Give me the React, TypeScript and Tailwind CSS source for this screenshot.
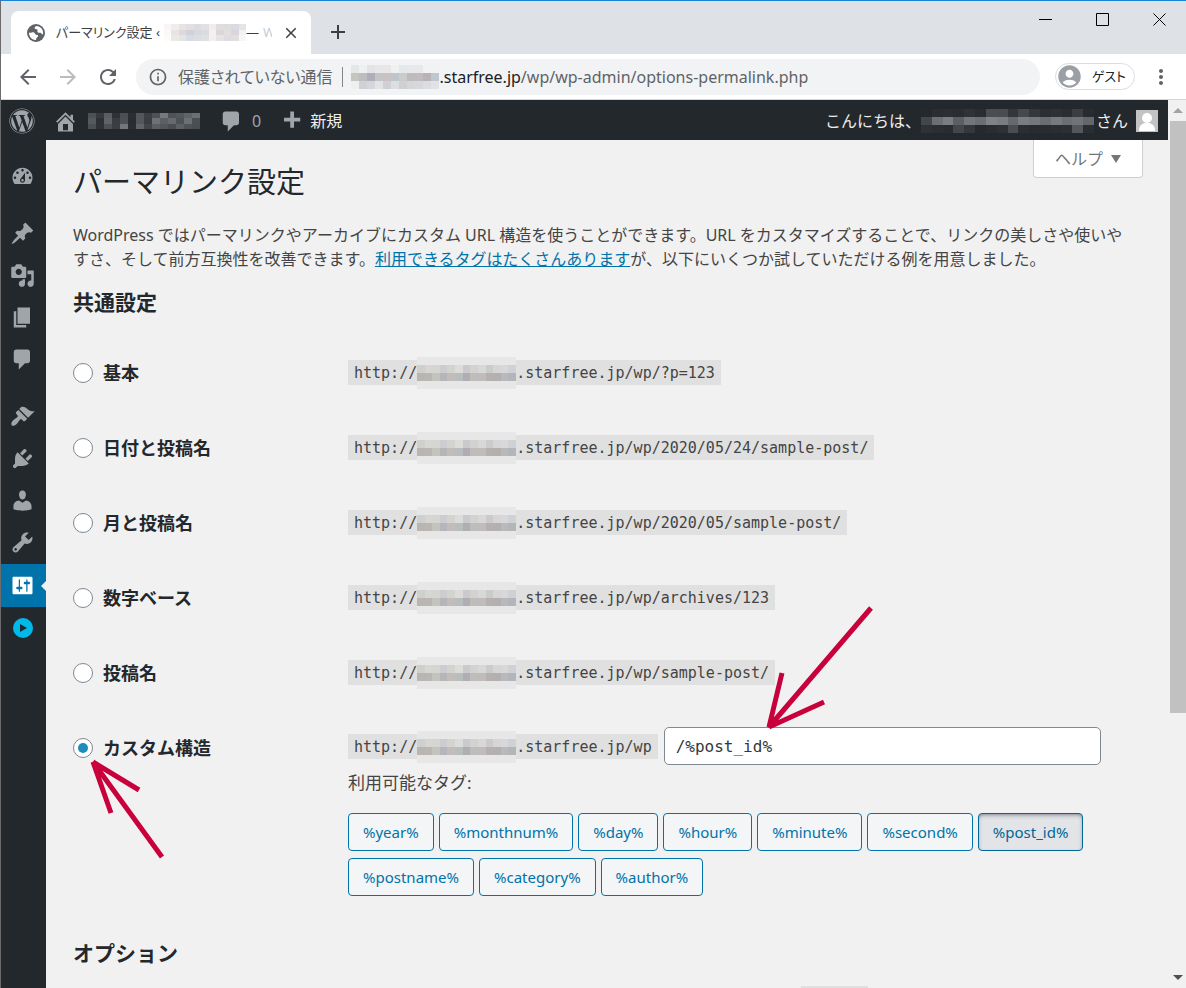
import { useState } from 'react';
import { FaWordpress } from 'react-icons/fa';
import {
  MdAccountCircle,
  MdAdd,
  MdArrowBack,
  MdArrowForward,
  MdClose,
  MdInfoOutline,
  MdMoreVert,
  MdRefresh,
} from 'react-icons/md';

const icons = {
  home: 'M16 8.5l1.53 1.53-1.06 1.06L10 4.6l-6.47 6.49-1.06-1.06L10 2.5l4 4v-2h2v4zm-6-2.46l6 5.99V18H4v-5.97zM12 17v-5H8v5h4z',
  plus: 'M17 7v3h-5v5H9v-5H4V7h5V2h3v5h5z',
  dashboard:
    'M3.76 16h12.48c1.1-1.37 1.76-3.11 1.76-5 0-4.42-3.58-8-8-8s-8 3.58-8 8c0 1.89.66 3.63 1.76 5zM10 4c.55 0 1 .45 1 1s-.45 1-1 1-1-.45-1-1 .45-1 1-1zM6 6c.55 0 1 .45 1 1s-.45 1-1 1-1-.45-1-1 .45-1 1-1zm8 0c.55 0 1 .45 1 1s-.45 1-1 1-1-.45-1-1 .45-1 1-1zm-5.37 5.55L12 7v6c0 1.1-.9 2-2 2s-2-.9-2-2c0-.57.24-1.08.63-1.45zM4 10c.55 0 1 .45 1 1s-.45 1-1 1-1-.45-1-1 .45-1 1-1zm12 0c.55 0 1 .45 1 1s-.45 1-1 1-1-.45-1-1 .45-1 1-1zm-5 3c0-.55-.45-1-1-1s-1 .45-1 1 .45 1 1 1 1-.45 1-1z',
  post: 'M10.44 3.02l1.82-1.82 6.36 6.35-1.83 1.82c-1.05-.68-2.48-.57-3.41.36l-.75.75c-.92.93-1.04 2.35-.35 3.41l-1.83 1.82-2.41-2.41-2.8 2.79c-.42.42-3.38 2.71-3.8 2.29s1.86-3.39 2.28-3.81l2.79-2.79L4.1 9.36l1.83-1.82c1.05.69 2.48.57 3.4-.36l.75-.75c.93-.92 1.05-2.35.36-3.41z',
  media:
    'M13 11V4c0-.55-.45-1-1-1h-1.67L9 1H5L3.67 3H2c-.55 0-1 .45-1 1v7c0 .55.45 1 1 1h10c.55 0 1-.45 1-1zM7 4.5c1.38 0 2.5 1.12 2.5 2.5S8.38 9.5 7 9.5 4.5 8.38 4.5 7 5.62 4.5 7 4.5zM14 6h5v10.5c0 1.38-1.12 2.5-2.5 2.5S14 17.88 14 16.5s1.12-2.5 2.5-2.5c.17 0 .34.02.5.05V9h-3V6zm-4 8.05V13h2v3.5c0 1.38-1.12 2.5-2.5 2.5S7 17.88 7 16.5 8.12 14 9.5 14c.17 0 .34.02.5.05z',
  page: 'M6 15V2h10v13H6zm-1 1h8v2H3V5h2v11z',
  comments:
    'M5 2h9c1.1 0 2 .9 2 2v7c0 1.1-.9 2-2 2h-2l-5 5v-5H5c-1.1 0-2-.9-2-2V4c0-1.1.9-2 2-2z',
  appearance:
    'M14.48 11.06L7.41 3.99l1.5-1.5c.5-.56 2.3-.47 3.51.32 1.21.8 1.43 1.28 2.91 2.1 1.18.64 2.45 1.26 4.45.85zm-.71.71L6.7 4.7 4.93 6.47c-.39.39-.39 1.02 0 1.41l1.06 1.06c.39.39.39 1.03 0 1.42-.6.6-1.43 1.11-2.21 1.69-.35.26-.7.53-1.01.84C1.43 14.23.4 16.08 1.4 17.07c.99 1 2.84-.03 4.18-1.36.31-.31.58-.66.85-1.02.57-.78 1.08-1.61 1.69-2.21.39-.39 1.02-.39 1.41 0l1.06 1.06c.39.39 1.02.39 1.41 0z',
  plugins:
    'M13.11 4.36L9.87 7.6 8 5.73l3.24-3.24c.35-.34 1.05-.2 1.56.32.52.51.66 1.21.31 1.55zm-8 1.77l.91-1.12 9.01 9.01-1.19.84c-.71.71-2.63 1.16-3.82 1.16H6.14L4.9 17.26c-.59.59-1.54.59-2.12 0-.59-.58-.59-1.53 0-2.12l1.24-1.24v-3.88c0-1.13.4-3.19 1.09-3.89zm7.26 3.97l3.24-3.24c.34-.35 1.04-.21 1.55.31.52.51.66 1.21.31 1.55l-3.24 3.25z',
  users:
    'M10 9.25c-2.27 0-2.73-3.44-2.73-3.44C7 4.02 7.82 2 9.97 2c2.16 0 2.98 2.02 2.71 3.81 0 0-.41 3.44-2.68 3.44zm0 2.57L12.72 10c2.39 0 4.52 2.33 4.52 4.53v2.49s-3.65 1.13-7.24 1.13c-3.65 0-7.24-1.13-7.24-1.13v-2.49c0-2.25 1.94-4.48 4.47-4.48z',
  tools:
    'M16.68 9.77c-1.34 1.34-3.3 1.67-4.95.99l-5.41 6.52c-.99.99-2.59.99-3.58 0s-.99-2.59 0-3.57l6.52-5.42c-.68-1.65-.35-3.61.99-4.95 1.28-1.28 3.12-1.62 4.72-1.06l-2.89 2.89 2.82 2.82 2.86-2.87c.53 1.58.18 3.39-1.08 4.65zM3.81 16.21c.4.39 1.04.39 1.43 0 .4-.4.4-1.04 0-1.43-.39-.4-1.03-.4-1.43 0-.39.39-.39 1.03 0 1.43z',
  settings:
    'M18 16V4c0-.55-.45-1-1-1H3c-.55 0-1 .45-1 1v12c0 .55.45 1 1 1h14c.55 0 1-.45 1-1zM8 11h1c.55 0 1 .45 1 1s-.45 1-1 1H8v1.5c0 .28-.22.5-.5.5s-.5-.22-.5-.5V13H6c-.55 0-1-.45-1-1s.45-1 1-1h1V5.5c0-.28.22-.5.5-.5s.5.22.5.5V11zm5-2h-1c-.55 0-1-.45-1-1s.45-1 1-1h1V5.5c0-.28.22-.5.5-.5s.5.22.5.5V7h1c.55 0 1 .45 1 1s-.45 1-1 1h-1v5.5c0 .28-.22.5-.5.5s-.5-.22-.5-.5V9z',
};

type IconName = keyof typeof icons;

function Dashicon({ name }: { name: IconName }) {
  return (
    <svg viewBox="0 0 20 20" className="size-[25px] shrink-0 fill-current" aria-hidden="true">
      <path d={icons[name]} />
    </svg>
  );
}

// Pixelated block that hides a private name, one string of hex shades per line
function Mosaic({ lines, className }: { lines: string[][]; className: string }) {
  const cols = lines[0].length;
  return (
    <svg
      viewBox={`0 0 ${cols} ${lines.length}`}
      preserveAspectRatio="none"
      shapeRendering="crispEdges"
      className={className}
      aria-hidden="true"
    >
      {lines.map((line, y) =>
        line.map((fill, x) => <rect key={`${x}-${y}`} x={x} y={y} width="1" height="1" fill={fill} />)
      )}
    </svg>
  );
}

const tabMosaic = [
  ['#f7f5f5', '#f0ecec', '#e6e3e4', '#e1dfe1', '#dcdcdf', '#e2e0e2', '#f0eded', '#e0dddd', '#dfdcdd', '#dadadf', '#e6e3e6'],
  ['#fbf8f8', '#e8e3e6', '#dcd8dc', '#cfd2d8', '#d8d9dd', '#d9dbdf', '#f3f0ef', '#dcd6d6', '#e3dddd', '#d6d6dc', '#f3f1f3'],
  ['#fcfafa', '#ece9e3', '#e2e4e9', '#d6dce3', '#dcdde2', '#dde1e2', '#f2efec', '#e5e3e3', '#dcdce2', '#e1dede', '#f7f6f6'],
];

const urlMosaic = [
  ['#e5e7e6', '#eff0f2', '#e4e4e7', '#e6e7e9', '#e9e6e7', '#eef0f1', '#e3e9ea', '#e8e8ea', '#e9e8e9', '#f0f2f3', '#f1f2f4'],
  ['#c5c4bf', '#bdbdc0', '#adaeb8', '#c5c3c5', '#cac1c3', '#bdc6cc', '#cbcbca', '#bfbabc', '#c0bbbd', '#b9b3b8', '#bfc8cf'],
  ['#eeeff1', '#cfd1d4', '#d5d6da', '#e3e3e5', '#d0d0d4', '#dedddf', '#cfd0d4', '#d6d5d8', '#d6d8dc', '#dcdde1', '#e2e2e4'],
];

const siteMosaic = [
  ['#4d5155', '#373b40', '#5a5e62', '#2f3338', '#4c5054', '#2b2f34', '#54585b', '#3c4045', '#4e5257', '#777a7c', '#4f5357', '#54585c', '#60646a', '#6d7072'],
  ['#565a5e', '#2d3136', '#606367', '#393d42', '#4d5155', '#292d32', '#54585d', '#3a3e43', '#6f7275', '#5c6064', '#686b6e', '#4d5256', '#6d7073', '#4b4f53'],
  ['#4b4f54', '#2f3338', '#4d5156', '#3b3f44', '#75787a', '#2b2f34', '#606367', '#42464b', '#5b5f63', '#53575b', '#4a4e53', '#5d6064', '#4f5358', '#4a4e52'],
];

const userMosaic = [
  ['#25292e', '#2a2e33', '#2c3035', '#2a2e33', '#2f3338', '#2a2e33', '#4a4e52', '#494d51', '#33373b', '#45494d', '#34383c', '#2b2f34', '#2d3136', '#2a2e33', '#3b3f43', '#282c31'],
  ['#43474b', '#6d7073', '#7b7e80', '#5c6064', '#74777a', '#6b6f72', '#808385', '#7a7d7f', '#66696d', '#7b7e80', '#75787b', '#6b6e71', '#777a7d', '#6c6f72', '#717477', '#63666a'],
  ['#2e3237', '#2b2f34', '#292d32', '#43474b', '#34383d', '#262a2f', '#292d32', '#2d3135', '#4a4e52', '#2b2f34', '#282c31', '#292d32', '#2a2e33', '#2c3035', '#54575b', '#2a2e33'],
];

const light = ['#cfcfcb', '#d6d6d3', '#d5d6d2', '#cdccd0', '#d3d4d0', '#dcdcda', '#cacacd', '#d2d2ce', '#d8d8d8', '#cbcbcc', '#d6d6d6', '#d7d8d9', '#cfd1d4'];
const dark = ['#b9b5b3', '#b9b6b4', '#c4c4be', '#b5b6b8', '#c2bcba', '#babdbe', '#afaeb5', '#c0bcbc', '#bfbcbd', '#b6b1ae', '#b4b0b0', '#b9b9bb', '#b2b5b9'];
const pale = Array<string>(13).fill('#e7e7e7');

const menu: { name: IconName; label: string; spaced?: boolean }[] = [
  { name: 'dashboard', label: 'ダッシュボード' },
  { name: 'post', label: '投稿', spaced: true },
  { name: 'media', label: 'メディア' },
  { name: 'page', label: '固定ページ' },
  { name: 'comments', label: 'コメント' },
  { name: 'appearance', label: '外観', spaced: true },
  { name: 'plugins', label: 'プラグイン' },
  { name: 'users', label: 'ユーザー' },
  { name: 'tools', label: 'ツール' },
];

const structures = [
  { id: 'plain', label: '基本', path: '/wp/?p=123' },
  { id: 'day', label: '日付と投稿名', path: '/wp/2020/05/24/sample-post/' },
  { id: 'month', label: '月と投稿名', path: '/wp/2020/05/sample-post/' },
  { id: 'numeric', label: '数字ベース', path: '/wp/archives/123' },
  { id: 'name', label: '投稿名', path: '/wp/sample-post/' },
];

const tags = ['year', 'monthnum', 'day', 'hour', 'minute', 'second', 'post_id', 'postname', 'category', 'author'];

function UrlCode({ path }: { path: string }) {
  return (
    <code className="flex h-[25px] shrink-0 items-center bg-[#e0e0e0] px-[6px] pt-px font-['DejaVu_Sans_Mono',monospace] text-[15px] leading-6 text-[#444]">
      http://
      <Mosaic lines={[pale, light, dark, pale]} className="h-8 w-[99px]" />
      .starfree.jp{path}
    </code>
  );
}

function Radio({ id, label, selected, onSelect }: { id: string; label: string; selected: string; onSelect: (id: string) => void }) {
  return (
    <div className="flex h-[41px] items-center gap-[10px]">
      <input
        type="radio"
        name="structure"
        id={id}
        checked={selected === id}
        onChange={() => onSelect(id)}
        className="grid size-5 appearance-none place-content-center rounded-full border border-[#7e8993] bg-white before:size-[10px] before:rounded-full checked:before:bg-[#1e8cbe]"
      />
      <label htmlFor={id} className="text-lg leading-6 font-bold text-[#23282d]">
        {label}
      </label>
    </div>
  );
}

function BrowserChrome() {
  return (
    <header className="shrink-0 font-['Noto_Sans','Noto_Sans_CJK_JP',sans-serif]">
      {/* Tab strip */}
      <div className="flex h-[53px] items-start bg-[#dee1e6] pl-[10px]">
        <div className="mt-[10px] flex h-[43px] w-[300px] items-center rounded-t-lg bg-white pr-[11px] pl-4">
          <svg viewBox="0 0 18 18" className="size-[18px] shrink-0" aria-hidden="true">
            <circle cx="9" cy="9" r="9" fill="#5f6368" />
            <path
              fill="#fff"
              d="M9.300 1.900C7.600 3 7.200 4 8 4.700c1 .8 2.100.1 2.500 1.200.3 1-.6 1.500.2 2.300.9.900 2.500.1 3.400.7.700.5.500 1.500 1.900 1.400C16.900 5.500 13.500 2 9.300 1.900zM1.900 8.500c0 4.500 3.400 7.600 7.300 7.600-.3-1.400-.1-2.200.9-2.700 1.100-.6 1.400-1.600.5-2.300-.8-.6-1.900-.3-2.500-1.200C7.300 8.600 6.300 8.200 5 8.400c-1.200.2-2 .5-3.100.1z"
            />
          </svg>
          <p className="ml-[11px] flex min-w-0 flex-1 items-center text-[13px] whitespace-nowrap text-[#3c4043] [font-feature-settings:'palt']">
            パーマリンク設定 ‹
            <Mosaic lines={tabMosaic} className="ml-1 h-[17px] w-[82px] shrink-0" />—
            <span className="ml-1 w-[9px] overflow-hidden text-[#c9cbcd]">W</span>
          </p>
          <button type="button" aria-label="タブを閉じる" className="text-[#3c4043]">
            <MdClose className="size-[18px]" />
          </button>
        </div>
        <button type="button" aria-label="新しいタブ" className="mt-[19px] ml-[15px] text-[#3c4043]">
          <MdAdd className="size-6" />
        </button>
        <div className="mt-3 mr-5 ml-auto flex gap-[44px]">
          {[
            { label: '最小化', d: 'M0 6.5h13' },
            { label: '最大化', d: 'M.5 .5h12v12h-12z' },
            { label: '閉じる', d: 'M.5 .5l12 12M12.5 .5l-12 12' },
          ].map(({ label, d }) => (
            <button key={label} type="button" aria-label={label}>
              <svg viewBox="0 0 13 13" className="size-[13px] fill-none stroke-black">
                <path d={d} />
              </svg>
            </button>
          ))}
        </div>
      </div>

      {/* Toolbar */}
      <div className="flex h-[46px] items-center border-b border-[#d5d7da] bg-white pr-[13px] pl-[15px] text-[#5f6368]">
        <button type="button" aria-label="戻る">
          <MdArrowBack className="size-6" />
        </button>
        <button type="button" aria-label="進む" className="ml-4 text-[#babcbe]">
          <MdArrowForward className="size-6" />
        </button>
        <button type="button" aria-label="再読み込み" className="ml-4">
          <MdRefresh className="size-6" />
        </button>
        <div className="ml-4 flex h-9 min-w-0 flex-1 items-center overflow-hidden rounded-full bg-[#f1f3f4] pl-3 text-base whitespace-nowrap">
          <MdInfoOutline className="size-5 shrink-0" />
          <span className="ml-[10px] [font-feature-settings:'palt']">保護されていない通信</span>
          <span className="ml-[10px] h-5 w-px bg-[#80868b]" />
          <Mosaic lines={urlMosaic} className="ml-2 h-6 w-[88px] shrink-0" />
          <span className="text-[#202124]">.starfree.jp</span>
          <span>/wp/wp-admin/options-permalink.php</span>
        </div>
        <button
          type="button"
          className="ml-[15px] flex h-[27px] items-center rounded-full border border-[#dadce0] pr-2 text-[13px] text-[#202124] [font-feature-settings:'palt']"
        >
          <MdAccountCircle className="mr-[9px] size-[27px] text-[#9aa0a6]" />
          ゲスト
        </button>
        <button type="button" aria-label="メニュー" className="ml-[14px]">
          <MdMoreVert className="size-6" />
        </button>
      </div>
    </header>
  );
}

function AdminBar() {
  return (
    <nav className="flex h-10 shrink-0 items-center bg-[#23282d] pt-[2px] pr-[10px] pl-2 text-base text-[#eee]">
      <a href="#about" aria-label="WordPress について" className="text-[#a0a5aa]">
        <FaWordpress className="size-[26px]" />
      </a>
      <a href="#site" aria-label="サイトを表示" className="ml-[18px] flex items-center text-[#a0a5aa]">
        <Dashicon name="home" />
        <Mosaic lines={siteMosaic} className="ml-[10px] h-4 w-[112px]" />
      </a>
      <a href="#comments" className="ml-[19px] flex items-center gap-2 text-[#a0a5aa]">
        <Dashicon name="comments" />0
      </a>
      <a href="#new" className="ml-[18px] flex items-center gap-[6px]">
        <span className="text-[#a0a5aa]">
          <Dashicon name="plus" />
        </span>
        新規
      </a>
      <a href="#profile" className="ml-auto flex items-center">
        こんにちは、
        <Mosaic lines={userMosaic} className="mr-[2px] h-6 w-[173px]" />
        さん
        <svg viewBox="0 0 22 22" className="ml-2 size-[22px]" aria-hidden="true">
          <path fill="#c3c3c3" d="M0 0h22v22H0z" />
          <circle cx="11" cy="8" r="5" fill="#fff" />
          <path fill="#fff" d="M3 21c0-5 2-7 6-8h4c4 1 6 3 6 8z" />
        </svg>
      </a>
    </nav>
  );
}

function Sidebar() {
  return (
    <nav className="flex w-[45px] shrink-0 flex-col bg-[#23282d] pt-[15px] text-[#a0a5aa]">
      {menu.map(({ name, label, spaced }) => (
        <a
          key={name}
          href={`#${name}`}
          aria-label={label}
          className={`flex h-[42px] items-center pl-[9px] ${spaced ? 'mt-[15px]' : ''}`}
        >
          <Dashicon name={name} />
        </a>
      ))}
      <a
        href="#settings"
        aria-label="設定"
        aria-current="page"
        className="relative mt-px flex h-[43px] items-center bg-[#0073aa] pl-[9px] text-white"
      >
        <Dashicon name="settings" />
        <span className="absolute top-1/2 right-0 -translate-y-1/2 border-y-[5px] border-r-[5px] border-y-transparent border-r-[#f1f1f1]" />
      </a>
      <a href="#collapse" aria-label="メニューを開く" className="flex h-[42px] items-center pl-3">
        <svg viewBox="0 0 20 20" className="size-5">
          <circle cx="10" cy="10" r="10" fill="#00b9eb" />
          <path fill="#23282d" d="M7 6l7 4-7 4z" />
        </svg>
      </a>
    </nav>
  );
}

function PermalinkForm() {
  const [selected, setSelected] = useState('custom');
  const [value, setValue] = useState('/%post_id%');

  return (
    <form>
      <div className="mt-[22px]">
        {structures.map(({ id, label, path }) => (
          <div key={id} className="grid grid-cols-[275px_1fr] items-center pt-4 pb-[18px]">
            <Radio id={id} label={label} selected={selected} onSelect={setSelected} />
            <div className="flex">
              <UrlCode path={path} />
            </div>
          </div>
        ))}

        <div className="grid grid-cols-[275px_1fr] items-start pt-4">
          <div className="relative">
            <Radio id="custom" label="カスタム構造" selected={selected} onSelect={setSelected} />
            <svg
              viewBox="0 0 80 104"
              className="pointer-events-none absolute top-[31px] left-4 h-[104px] w-20 fill-none stroke-[#c8003c] stroke-[5]"
              aria-hidden="true"
            >
              <path d="M73 99L4 4l18 51M4 4l46 28" />
            </svg>
          </div>
          <div>
            <div className="flex items-center gap-[6px]">
              <UrlCode path="/wp" />
              <div className="relative">
                <input
                  type="text"
                  aria-label="カスタム構造"
                  value={value}
                  onChange={(e) => setValue(e.target.value)}
                  className="h-[38px] w-[437px] rounded-[5px] border border-[#7e8993] bg-white px-[11px] font-['DejaVu_Sans_Mono',monospace] text-base text-[#32373c]"
                />
                <svg
                  viewBox="0 0 112 128"
                  className="pointer-events-none absolute -top-[123px] left-[100px] h-32 w-28 fill-none stroke-[#c8003c] stroke-[5]"
                  aria-hidden="true"
                >
                  <path d="M107 4L5 123l13-54M5 123l55-25" />
                </svg>
              </div>
            </div>
            <p className="mt-[6px] text-[17px] leading-6">利用可能なタグ:</p>
            <ul className="mt-[18px] flex flex-wrap gap-x-[5px] gap-y-[7px]">
              {tags.map((tag) => {
                const active = value.includes(`%${tag}%`);
                return (
                  <li key={tag}>
                    <button
                      type="button"
                      onClick={() => setValue(`${value}/%${tag}%`)}
                      className={
                        active
                          ? 'h-[38px] rounded-[4px] border border-[#006799] bg-[#e2e4e7] px-[14px] text-[15px] text-[#006799] inset-shadow-[0_2px_5px_-2px_#555d66]'
                          : 'h-[38px] rounded-[4px] border border-[#0073aa] bg-[#f3f5f6] px-[14px] text-[15px] text-[#0073aa]'
                      }
                    >
                      %{tag}%
                    </button>
                  </li>
                );
              })}
            </ul>
          </div>
        </div>
      </div>

      <h2 className="mt-[45px] text-[21px] leading-6 font-bold text-[#23282d]">オプション</h2>
      <div className="mt-[21px] ml-[68%] h-[25px] w-[67px] bg-[#e0e0e0]" />
    </form>
  );
}

function ScrollBar() {
  return (
    <div className="flex w-[18px] shrink-0 flex-col items-end bg-[#f1f1f1]">
      <div className="flex h-[21px] w-4 items-center justify-center">
        <span className="border-x-[5px] border-b-[5px] border-x-transparent border-b-[#a3a3a3]" />
      </div>
      <div className="w-4 flex-1">
        <div className="h-[70%] bg-[#c1c1c1]" />
      </div>
      <div className="flex h-[21px] w-4 items-center justify-center">
        <span className="border-x-[5px] border-t-[5px] border-x-transparent border-t-[#505050]" />
      </div>
    </div>
  );
}

export default function App() {
  return (
    <div className="flex h-screen flex-col overflow-hidden border-t border-l border-t-[#1883d7] border-l-[#6b6b6b] bg-[#f1f1f1] font-['Noto_Sans','Noto_Sans_CJK_JP',sans-serif]">
      <BrowserChrome />
      <div className="flex min-h-0 flex-1">
        <div className="flex min-w-0 flex-1 flex-col">
          <AdminBar />
          <div className="flex min-h-0 flex-1">
            <Sidebar />
            <main className="min-w-0 flex-1 overflow-hidden pr-[25px] pl-[27px] text-[#444]">
              <div className="flex items-start justify-between">
                <h1 className="mt-[22px] text-[29px] leading-10 text-[#23282d]">パーマリンク設定</h1>
                <button
                  type="button"
                  className="flex h-[38px] items-center gap-2 rounded-b-[4px] border border-t-0 border-[#ccd0d4] bg-white px-[21px] text-base text-[#72777c]"
                >
                  ヘルプ
                  <span className="border-x-[5px] border-t-[8px] border-x-transparent border-t-[#72777c]" />
                </button>
              </div>
              <p className="mt-[21px] pr-4 text-base leading-6">
                WordPress ではパーマリンクやアーカイブにカスタム URL
                構造を使うことができます。URL をカスタマイズすることで、リンクの美しさや使いやすさ、そして前方互換性を改善できます。
                <a href="#tags" className="text-[#0073aa] underline">
                  利用できるタグはたくさんあります
                </a>
                が、以下にいくつか試していただける例を用意しました。
              </p>
              <h2 className="mt-[19px] text-[21px] leading-6 font-bold text-[#23282d]">共通設定</h2>
              <PermalinkForm />
            </main>
          </div>
        </div>
        <ScrollBar />
      </div>
    </div>
  );
}
